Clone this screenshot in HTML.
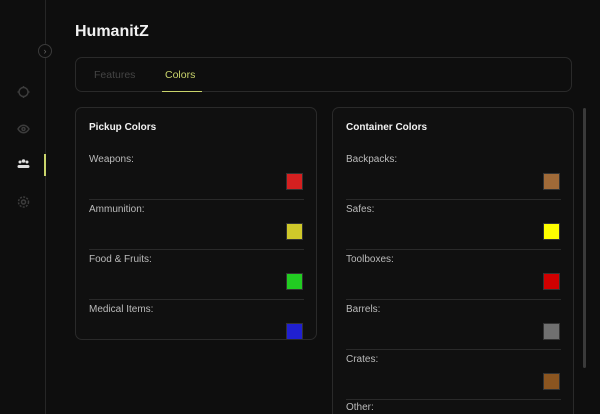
<!DOCTYPE html>
<html><head><style>
*{margin:0;padding:0;box-sizing:border-box}
html,body{width:600px;height:414px;overflow:hidden}
body{background:#0e0e0e;font-family:"Liberation Sans",sans-serif;color:#ccc;position:relative}
.side{position:absolute;left:45px;top:0;width:1px;height:414px;background:#262626}
.ind{position:absolute;left:44px;top:154px;width:2px;height:22px;background:#c9d46b}
.col{position:absolute;left:38px;top:44px;width:14px;height:14px;border:1px solid #3a3a3a;border-radius:50%;background:#0e0e0e;color:#666;font-size:9px;text-align:center;line-height:12px}
h1{position:absolute;left:75px;top:23px;font-size:16px;color:#f2f2f2;font-weight:bold}
.tabs{position:absolute;left:75px;top:57px;width:497px;height:35px;border:1px solid #2a2a2a;border-radius:7px}
.t{position:absolute;top:11px;font-size:10.5px}
.ul{position:absolute;top:33px;width:40px;height:1px;background:#c9d46b}
.p{position:absolute;top:107px;width:242px;border:1px solid #2a2a2a;border-radius:7px;background:#101010;overflow:hidden}
.p h2{position:absolute;left:13px;top:14px;font-size:10px;color:#f2f2f2;font-weight:bold}
.r{position:absolute;left:13px;width:215px;height:50px;font-size:10px;color:#bbb}
.r span{position:absolute;left:0;top:4px}
.r i{position:absolute;right:1px;top:23px;width:17px;height:17px;border:1px solid #333}
.r.b{border-bottom:1px solid #2a2a2a}
.sb{position:absolute;left:583px;top:108px;width:3px;height:260px;background:#3a3a3a;border-radius:2px}
</style></head><body>
<div class="side"></div><div class="ind"></div>
<div class="col">›</div>
<svg style="position:absolute;left:16px;top:85px" width="15" height="130" fill="none" stroke="#3c3c3c" stroke-width="1.5">
<circle cx="7.5" cy="7" r="4.5"/><path d="M7.5 1v2M7.5 11v2M1.5 7h2M11.5 7h2"/>
<path d="M2 44c3-5 8-5 11 0c-3 5-8 5-11 0z"/><circle cx="7.5" cy="44" r="1.5"/>
<g fill="#ddd" stroke="none"><circle cx="4" cy="77" r="1.5"/><circle cx="7.5" cy="76" r="1.8"/><circle cx="11" cy="77" r="1.5"/><rect x="1.5" y="80" width="12" height="3" rx="1.5"/></g>
<circle cx="7.5" cy="117" r="2"/><circle cx="7.5" cy="117" r="5" stroke-dasharray="2 1.3"/>
</svg>
<h1>HumanitZ</h1>
<div class="tabs"><span class="t" style="left:18px;color:#444">Features</span><span class="t" style="left:89px;color:#c9d46b">Colors</span><div class="ul" style="left:86px"></div></div>
<div class="p" style="left:75px;height:233px"><h2>Pickup Colors</h2>
<div class="r b" style="top:42px"><span>Weapons:</span><i style="background:#d42020"></i></div>
<div class="r b" style="top:92px"><span>Ammunition:</span><i style="background:#cfc82a"></i></div>
<div class="r b" style="top:142px"><span>Food &amp; Fruits:</span><i style="background:#22cc22"></i></div>
<div class="r" style="top:192px"><span>Medical Items:</span><i style="background:#2020d0"></i></div>
</div>
<div class="p" style="left:332px;height:307px;border-bottom:none;border-radius:7px 7px 0 0"><h2>Container Colors</h2>
<div class="r b" style="top:42px"><span>Backpacks:</span><i style="background:#a06a38"></i></div>
<div class="r b" style="top:92px"><span>Safes:</span><i style="background:#ffff00"></i></div>
<div class="r b" style="top:142px"><span>Toolboxes:</span><i style="background:#d00000"></i></div>
<div class="r b" style="top:192px"><span>Barrels:</span><i style="background:#707070"></i></div>
<div class="r b" style="top:242px"><span>Crates:</span><i style="background:#8b5520"></i></div>
<div class="r" style="top:292px;height:14px"><span style="top:2px">Other:</span></div>
</div>
<div class="sb"></div>
</body></html>
